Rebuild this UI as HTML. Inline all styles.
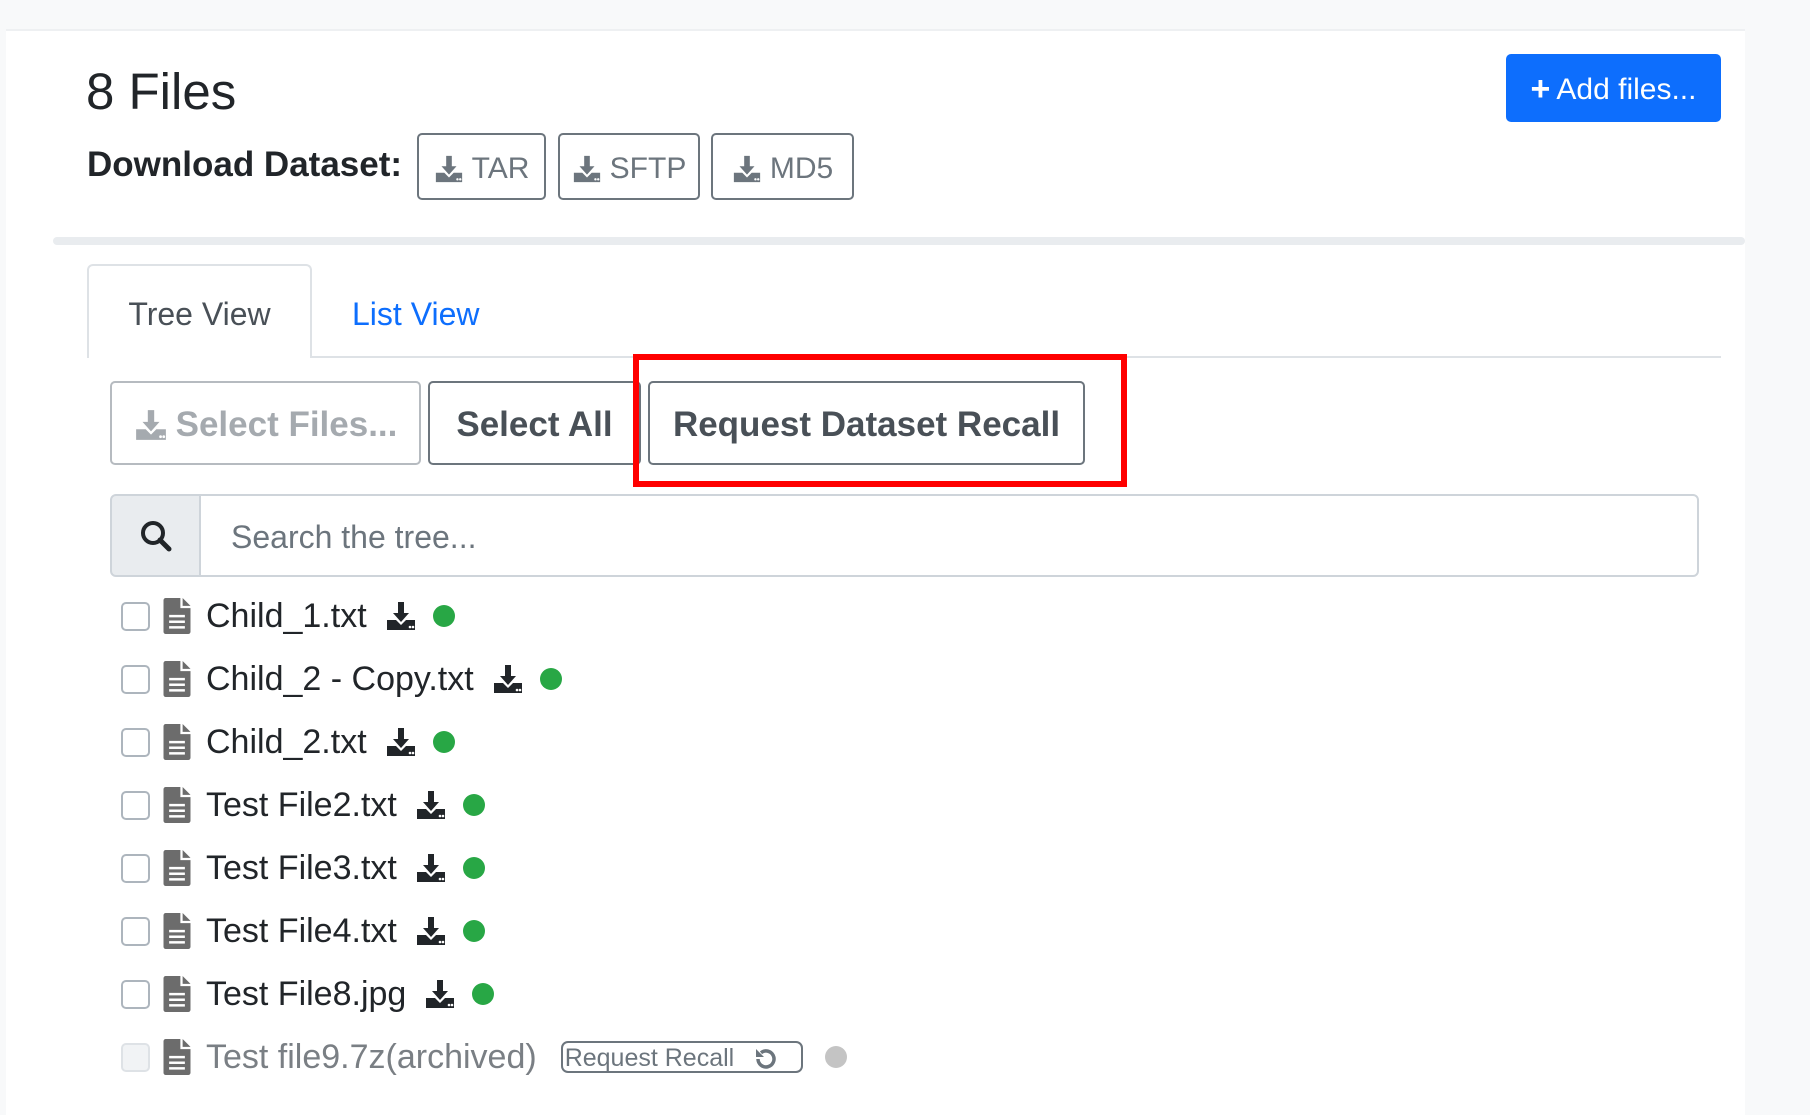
<!DOCTYPE html>
<html><head><meta charset="utf-8"><style>
*{box-sizing:border-box;margin:0;padding:0}
body{width:1810px;height:1115px;background:#f8f9fa;font-family:"Liberation Sans",sans-serif;position:relative;overflow:hidden;color:#212529}
.a{position:absolute}
.card{left:6px;top:29px;width:1739px;height:1086px;background:#fff;border-top:2px solid #eef0f2}
.btn{position:absolute;border:2px solid #6c757d;border-radius:5px;display:flex;align-items:center;justify-content:center;color:#6c757d;background:#fff;padding-top:4px}
.row{position:absolute;left:121px;height:40px;display:flex;align-items:center;font-size:34px;color:#212529}
.cb{width:29px;height:29px;border:2px solid #adb5bd;border-radius:5px;margin-right:12px;background:#fff}
.dot{width:22px;height:22px;border-radius:50%;background:#28a745;margin-left:16px}
.fi{margin-right:14px}
</style></head><body>
<svg width="0" height="0" style="position:absolute"><defs>
<symbol id="dl" viewBox="0 0 32 32"><path d="M13 2h6v11h5l-8 9-8-9h5z M2 20h9l5 5 5-5h9v10H2z" fill="currentColor"/><circle cx="25" cy="27" r="1.3" fill="#fff"/><circle cx="28" cy="27" r="1.3" fill="#fff"/></symbol>
<symbol id="file" viewBox="0 0 24 32"><path d="M0 2a2 2 0 0 1 2-2h13v9h9v21a2 2 0 0 1-2 2H2a2 2 0 0 1-2-2z M17 0l7 7h-7z" fill="#6c6c6c"/><rect x="5" y="15" width="14" height="2.2" fill="#fff"/><rect x="5" y="20" width="14" height="2.2" fill="#fff"/><rect x="5" y="25" width="14" height="2.2" fill="#fff"/></symbol>
</defs></svg>
<div class="a card"></div>
<div class="a" style="left:86px;top:60px;font-size:51px;line-height:64px;font-weight:500">8 Files</div>
<div class="a" style="left:1506px;top:54px;width:215px;height:68px;background:#0d6efd;border-radius:5px;color:#fff;font-size:30px;display:flex;align-items:center;justify-content:center;padding-top:3px"><b style="font-size:34px;margin-right:6px">+</b>Add files...</div>
<div class="a" style="left:87px;top:145px;font-size:35px;font-weight:bold;line-height:40px">Download Dataset:</div>
<div class="btn" style="left:417px;top:133px;width:129px;height:67px;font-size:30px"><svg width="30" height="30" style="margin-right:8px"><use href="#dl"/></svg>TAR</div>
<div class="btn" style="left:558px;top:133px;width:142px;height:67px;font-size:30px"><svg width="30" height="30" style="margin-right:8px"><use href="#dl"/></svg>SFTP</div>
<div class="btn" style="left:711px;top:133px;width:143px;height:67px;font-size:30px"><svg width="30" height="30" style="margin-right:8px"><use href="#dl"/></svg>MD5</div>
<div class="a" style="left:53px;top:237px;width:1692px;height:8px;background:#e9ecef;border-radius:4px"></div>
<div class="a" style="left:87px;top:356px;width:1634px;height:2px;background:#dee2e6"></div>
<div class="a" style="left:87px;top:264px;width:225px;height:94px;border:2px solid #dee2e6;border-bottom:none;border-radius:6px 6px 0 0;background:#fff;display:flex;align-items:center;justify-content:center;font-size:32px;color:#495057;padding-top:4px">Tree View</div>
<div class="a" style="left:352px;top:296px;font-size:32px;color:#0d6efd">List View</div>
<div class="btn" style="left:110px;top:381px;width:311px;height:84px;border-color:#b6bbc0;color:#a5aaaf;font-size:35px;font-weight:bold"><svg width="34" height="34" style="margin-right:8px"><use href="#dl"/></svg>Select Files...</div>
<div class="btn" style="left:428px;top:381px;width:213px;height:84px;color:#495057;font-size:35px;font-weight:bold">Select All</div>
<div class="btn" style="left:648px;top:381px;width:437px;height:84px;color:#495057;font-size:35px;font-weight:bold">Request Dataset Recall</div>
<div class="a" style="left:633px;top:354px;width:494px;height:133px;border:6px solid #f00"></div>
<div class="a" style="left:110px;top:494px;width:91px;height:83px;background:#e9ecef;border:2px solid #ced4da;border-radius:6px 0 0 6px;display:flex;align-items:center;justify-content:center"><svg width="34" height="34" viewBox="0 0 34 34"><circle cx="14" cy="14" r="10" fill="none" stroke="#212529" stroke-width="4"/><path d="M21 21l9 9" stroke="#212529" stroke-width="5" stroke-linecap="round"/></svg></div>
<div class="a" style="left:199px;top:494px;width:1500px;height:83px;border:2px solid #ced4da;border-radius:0 6px 6px 0;display:flex;align-items:center;padding-left:30px;padding-top:4px;font-size:32px;color:#6c757d">Search the tree...</div>

<div class="row" style="top:596px"><div class="cb"></div><svg class="fi" width="30" height="36"><use href="#file"/></svg>Child_1.txt<svg width="32" height="32" style="margin-left:18px"><use href="#dl"/></svg><div class="dot"></div></div>
<div class="row" style="top:659px"><div class="cb"></div><svg class="fi" width="30" height="36"><use href="#file"/></svg>Child_2 - Copy.txt<svg width="32" height="32" style="margin-left:18px"><use href="#dl"/></svg><div class="dot"></div></div>
<div class="row" style="top:722px"><div class="cb"></div><svg class="fi" width="30" height="36"><use href="#file"/></svg>Child_2.txt<svg width="32" height="32" style="margin-left:18px"><use href="#dl"/></svg><div class="dot"></div></div>
<div class="row" style="top:785px"><div class="cb"></div><svg class="fi" width="30" height="36"><use href="#file"/></svg>Test File2.txt<svg width="32" height="32" style="margin-left:18px"><use href="#dl"/></svg><div class="dot"></div></div>
<div class="row" style="top:848px"><div class="cb"></div><svg class="fi" width="30" height="36"><use href="#file"/></svg>Test File3.txt<svg width="32" height="32" style="margin-left:18px"><use href="#dl"/></svg><div class="dot"></div></div>
<div class="row" style="top:911px"><div class="cb"></div><svg class="fi" width="30" height="36"><use href="#file"/></svg>Test File4.txt<svg width="32" height="32" style="margin-left:18px"><use href="#dl"/></svg><div class="dot"></div></div>
<div class="row" style="top:974px"><div class="cb"></div><svg class="fi" width="30" height="36"><use href="#file"/></svg>Test File8.jpg<svg width="32" height="32" style="margin-left:18px"><use href="#dl"/></svg><div class="dot"></div></div>
<div class="row" style="top:1037px;color:#7a7f84"><div class="cb" style="background:#f1f3f5;border-color:#dee2e6"></div><svg class="fi" width="30" height="36"><use href="#file"/></svg>Test file9.7z(archived)
<div style="margin-left:24px;height:32px;width:242px;border:2px solid #6c757d;border-radius:7px;font-size:25px;display:flex;align-items:center;padding-left:2px;padding-top:3px;color:#6c757d">Request Recall<svg width="26" height="26" viewBox="0 0 26 26" style="margin-left:18px"><path d="M6 13a8 8 0 1 0 3-6.3" fill="none" stroke="#6c757d" stroke-width="3.5"/><path d="M4 3v8h8z" fill="#6c757d"/></svg></div>
<div class="dot" style="background:#c4c4c4;margin-left:22px"></div></div>
</body></html>
